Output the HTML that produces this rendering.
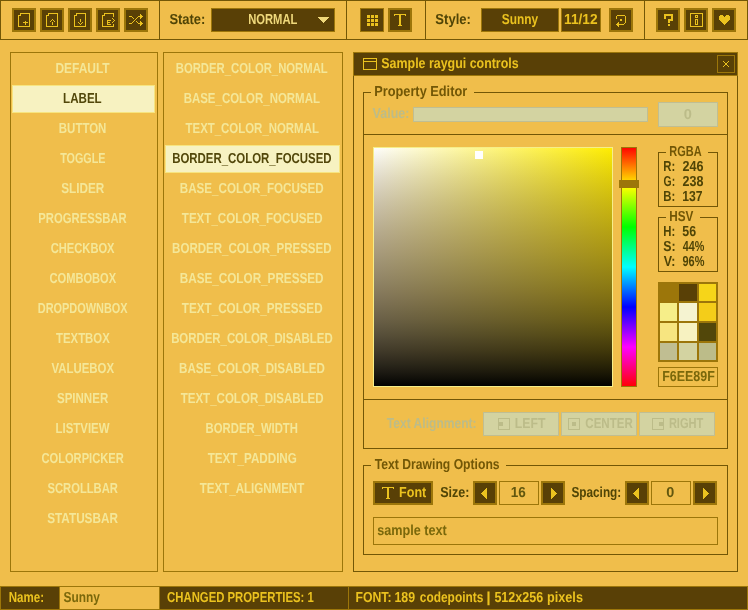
<!DOCTYPE html>
<html lang="en"><head><meta charset="utf-8"><title>rGuiStyler - Sunny</title>
<style>
html,body{margin:0;padding:0;background:#f0be4b;overflow:hidden}
svg{display:block;will-change:transform;font-family:"Liberation Sans",sans-serif;font-size:14.5px;font-weight:bold;shape-rendering:crispEdges;text-rendering:geometricPrecision}
text{white-space:pre}
</style></head>
<body>
<svg width="748" height="610" viewBox="0 0 748 610">
<defs>
<linearGradient id="gh" x1="0" y1="0" x2="1" y2="0"><stop offset="0" stop-color="#ffffff"/><stop offset="1" stop-color="#ffee00"/></linearGradient>
<linearGradient id="gv" x1="0" y1="0" x2="0" y2="1"><stop offset="0.0000" stop-color="#785f26" stop-opacity="0.0000"/><stop offset="0.0312" stop-color="#785f25" stop-opacity="0.0606"/><stop offset="0.0625" stop-color="#785f25" stop-opacity="0.1174"/><stop offset="0.0938" stop-color="#775f25" stop-opacity="0.1707"/><stop offset="0.1250" stop-color="#775e25" stop-opacity="0.2207"/><stop offset="0.1562" stop-color="#765e25" stop-opacity="0.2675"/><stop offset="0.1875" stop-color="#755d25" stop-opacity="0.3113"/><stop offset="0.2188" stop-color="#745c24" stop-opacity="0.3523"/><stop offset="0.2500" stop-color="#735b24" stop-opacity="0.3906"/><stop offset="0.2812" stop-color="#725a24" stop-opacity="0.4265"/><stop offset="0.3125" stop-color="#705923" stop-opacity="0.4602"/><stop offset="0.3438" stop-color="#6e5722" stop-opacity="0.4918"/><stop offset="0.3750" stop-color="#6c5522" stop-opacity="0.5215"/><stop offset="0.4062" stop-color="#695321" stop-opacity="0.5495"/><stop offset="0.4375" stop-color="#675120" stop-opacity="0.5759"/><stop offset="0.4688" stop-color="#634f1f" stop-opacity="0.6010"/><stop offset="0.5000" stop-color="#604c1e" stop-opacity="0.6250"/><stop offset="0.5312" stop-color="#5c491d" stop-opacity="0.6480"/><stop offset="0.5625" stop-color="#58461c" stop-opacity="0.6702"/><stop offset="0.5938" stop-color="#54421a" stop-opacity="0.6917"/><stop offset="0.6250" stop-color="#4f3e19" stop-opacity="0.7129"/><stop offset="0.6562" stop-color="#4a3a17" stop-opacity="0.7338"/><stop offset="0.6875" stop-color="#443615" stop-opacity="0.7546"/><stop offset="0.7188" stop-color="#3f3214" stop-opacity="0.7756"/><stop offset="0.7500" stop-color="#382d12" stop-opacity="0.7969"/><stop offset="0.7812" stop-color="#322810" stop-opacity="0.8186"/><stop offset="0.8125" stop-color="#2b220e" stop-opacity="0.8411"/><stop offset="0.8438" stop-color="#251d0b" stop-opacity="0.8643"/><stop offset="0.8750" stop-color="#1e1709" stop-opacity="0.8887"/><stop offset="0.9062" stop-color="#161207" stop-opacity="0.9142"/><stop offset="0.9375" stop-color="#0f0c05" stop-opacity="0.9412"/><stop offset="0.9688" stop-color="#070602" stop-opacity="0.9697"/><stop offset="1.0000" stop-color="#000000" stop-opacity="1.0000"/></linearGradient>
<linearGradient id="hue" x1="0" y1="0" x2="0" y2="1"><stop offset="0" stop-color="#ff0000"/><stop offset="0.1667" stop-color="#ffff00"/><stop offset="0.3333" stop-color="#00ff00"/><stop offset="0.5" stop-color="#00ffff"/><stop offset="0.6667" stop-color="#0000ff"/><stop offset="0.8333" stop-color="#ff00ff"/><stop offset="1" stop-color="#ff0000"/></linearGradient>
</defs>
<rect x="0" y="0" width="748" height="610" fill="#f0be4b"/>
<rect x="0" y="0" width="160" height="1" fill="#725706"/>
<rect x="0" y="39" width="160" height="1" fill="#725706"/>
<rect x="0" y="1" width="1" height="38" fill="#725706"/>
<rect x="159" y="1" width="1" height="38" fill="#725706"/>
<rect x="159" y="0" width="188" height="1" fill="#725706"/>
<rect x="159" y="39" width="188" height="1" fill="#725706"/>
<rect x="159" y="1" width="1" height="38" fill="#725706"/>
<rect x="346" y="1" width="1" height="38" fill="#725706"/>
<rect x="346" y="0" width="80" height="1" fill="#725706"/>
<rect x="346" y="39" width="80" height="1" fill="#725706"/>
<rect x="346" y="1" width="1" height="38" fill="#725706"/>
<rect x="425" y="1" width="1" height="38" fill="#725706"/>
<rect x="425" y="0" width="220" height="1" fill="#725706"/>
<rect x="425" y="39" width="220" height="1" fill="#725706"/>
<rect x="425" y="1" width="1" height="38" fill="#725706"/>
<rect x="644" y="1" width="1" height="38" fill="#725706"/>
<rect x="644" y="0" width="104" height="1" fill="#725706"/>
<rect x="644" y="39" width="104" height="1" fill="#725706"/>
<rect x="644" y="1" width="1" height="38" fill="#725706"/>
<rect x="747" y="1" width="1" height="38" fill="#725706"/>
<rect x="12" y="8" width="24" height="24" fill="#9c760a"/>
<rect x="14" y="10" width="20" height="20" fill="#594006"/>
<path d="M20 13h10v1h-10zM20 14h1v1h-1zM29 14h1v1h-1zM18 15h3v1h-3zM29 15h1v1h-1zM18 16h1v1h-1zM29 16h1v1h-1zM18 17h1v1h-1zM29 17h1v1h-1zM18 18h1v1h-1zM29 18h1v1h-1zM18 19h1v1h-1zM29 19h1v1h-1zM18 20h1v1h-1zM29 20h1v1h-1zM18 21h1v1h-1zM25 21h1v1h-1zM29 21h1v1h-1zM18 22h1v1h-1zM23 22h5v1h-5zM29 22h1v1h-1zM18 23h1v1h-1zM25 23h1v1h-1zM29 23h1v1h-1zM18 24h1v1h-1zM25 24h1v1h-1zM29 24h1v1h-1zM18 25h1v1h-1zM29 25h1v1h-1zM18 26h12v1h-12z" fill="#ebc21f"/>
<rect x="40" y="8" width="24" height="24" fill="#9c760a"/>
<rect x="42" y="10" width="20" height="20" fill="#594006"/>
<path d="M48 13h10v1h-10zM48 14h1v1h-1zM57 14h1v1h-1zM46 15h3v1h-3zM57 15h1v1h-1zM46 16h1v1h-1zM57 16h1v1h-1zM46 17h1v1h-1zM57 17h1v1h-1zM46 18h1v1h-1zM57 18h1v1h-1zM46 19h1v1h-1zM52 19h1v1h-1zM57 19h1v1h-1zM46 20h1v1h-1zM51 20h1v1h-1zM53 20h1v1h-1zM57 20h1v1h-1zM46 21h1v1h-1zM50 21h1v1h-1zM54 21h1v1h-1zM57 21h1v1h-1zM46 22h1v1h-1zM52 22h1v1h-1zM57 22h1v1h-1zM46 23h1v1h-1zM52 23h1v1h-1zM57 23h1v1h-1zM46 24h1v1h-1zM52 24h1v1h-1zM57 24h1v1h-1zM46 25h1v1h-1zM57 25h1v1h-1zM46 26h12v1h-12z" fill="#ebc21f"/>
<rect x="68" y="8" width="24" height="24" fill="#9c760a"/>
<rect x="70" y="10" width="20" height="20" fill="#594006"/>
<path d="M76 13h10v1h-10zM76 14h1v1h-1zM85 14h1v1h-1zM74 15h3v1h-3zM85 15h1v1h-1zM74 16h1v1h-1zM85 16h1v1h-1zM74 17h1v1h-1zM85 17h1v1h-1zM74 18h1v1h-1zM85 18h1v1h-1zM74 19h1v1h-1zM80 19h1v1h-1zM85 19h1v1h-1zM74 20h1v1h-1zM80 20h1v1h-1zM85 20h1v1h-1zM74 21h1v1h-1zM80 21h1v1h-1zM85 21h1v1h-1zM74 22h1v1h-1zM78 22h1v1h-1zM82 22h1v1h-1zM85 22h1v1h-1zM74 23h1v1h-1zM79 23h1v1h-1zM81 23h1v1h-1zM85 23h1v1h-1zM74 24h1v1h-1zM80 24h1v1h-1zM85 24h1v1h-1zM74 25h1v1h-1zM85 25h1v1h-1zM74 26h12v1h-12z" fill="#ebc21f"/>
<rect x="96" y="8" width="24" height="24" fill="#9c760a"/>
<rect x="98" y="10" width="20" height="20" fill="#594006"/>
<path d="M104 13h10v1h-10zM104 14h1v1h-1zM113 14h1v1h-1zM102 15h3v1h-3zM113 15h1v1h-1zM102 16h1v1h-1zM113 16h1v1h-1zM102 17h1v1h-1zM102 18h1v1h-1zM112 18h1v1h-1zM102 19h1v1h-1zM113 19h1v1h-1zM102 20h1v1h-1zM107 20h4v1h-4zM114 20h1v1h-1zM102 21h1v1h-1zM107 21h1v1h-1zM113 21h1v1h-1zM102 22h1v1h-1zM107 22h3v1h-3zM112 22h1v1h-1zM102 23h1v1h-1zM107 23h1v1h-1zM102 24h1v1h-1zM107 24h4v1h-4zM113 24h1v1h-1zM102 25h1v1h-1zM113 25h1v1h-1zM102 26h12v1h-12z" fill="#ebc21f"/>
<rect x="124" y="8" width="24" height="24" fill="#9c760a"/>
<rect x="126" y="10" width="20" height="20" fill="#594006"/>
<path d="M140 14h1v1h-1zM140 15h2v1h-2zM129 16h3v1h-3zM138 16h5v1h-5zM132 17h1v1h-1zM137 17h1v1h-1zM140 17h2v1h-2zM133 18h1v1h-1zM136 18h1v1h-1zM140 18h1v1h-1zM135 19h1v1h-1zM134 20h1v1h-1zM133 21h1v1h-1zM136 21h1v1h-1zM140 21h1v1h-1zM132 22h1v1h-1zM137 22h1v1h-1zM140 22h2v1h-2zM129 23h3v1h-3zM138 23h5v1h-5zM140 24h2v1h-2zM140 25h1v1h-1z" fill="#ebc21f"/>
<text x="169.38" y="24" textLength="36.02" lengthAdjust="spacingAndGlyphs" fill="#504506">State:</text>
<rect x="211" y="8" width="124" height="24" fill="#9c760a"/>
<rect x="212" y="9" width="122" height="22" fill="#594006"/>
<text x="248.19" y="24" textLength="49.20" lengthAdjust="spacingAndGlyphs" fill="#efd87b">NORMAL</text>
<path d="M318 17h11l-5.5 6z" fill="#efd87b"/>
<rect x="360" y="8" width="24" height="24" fill="#9c760a"/>
<rect x="361" y="9" width="22" height="22" fill="#594006"/>
<path d="M367 15h3v1h-3zM371 15h3v1h-3zM375 15h3v1h-3zM367 16h3v1h-3zM371 16h3v1h-3zM375 16h3v1h-3zM367 17h3v1h-3zM371 17h3v1h-3zM375 17h3v1h-3zM367 19h3v1h-3zM371 19h3v1h-3zM375 19h3v1h-3zM367 20h3v1h-3zM371 20h3v1h-3zM375 20h3v1h-3zM367 21h3v1h-3zM371 21h3v1h-3zM375 21h3v1h-3zM367 23h3v1h-3zM371 23h3v1h-3zM375 23h3v1h-3zM367 24h3v1h-3zM371 24h3v1h-3zM375 24h3v1h-3zM367 25h3v1h-3zM371 25h3v1h-3zM375 25h3v1h-3z" fill="#ebc21f"/>
<rect x="388" y="8" width="24" height="24" fill="#9c760a"/>
<rect x="390" y="10" width="20" height="20" fill="#594006"/>
<path d="M394 14h12v1h-12zM394 15h1v1h-1zM399 15h2v1h-2zM405 15h1v1h-1zM399 16h2v1h-2zM399 17h2v1h-2zM399 18h2v1h-2zM399 19h2v1h-2zM399 20h2v1h-2zM399 21h2v1h-2zM399 22h2v1h-2zM399 23h2v1h-2zM399 24h2v1h-2zM398 25h4v1h-4z" fill="#ebc21f"/>
<text x="435.37" y="24" textLength="35.49" lengthAdjust="spacingAndGlyphs" fill="#504506">Style:</text>
<rect x="481" y="8" width="78" height="24" fill="#9c760a"/>
<rect x="482" y="9" width="76" height="22" fill="#594006"/>
<text x="501.69" y="24" textLength="36.40" lengthAdjust="spacingAndGlyphs" fill="#ebc21f">Sunny</text>
<rect x="561" y="8" width="40" height="24" fill="#9c760a"/>
<rect x="562" y="9" width="38" height="22" fill="#594006"/>
<text x="564.08" y="24" textLength="33.55" lengthAdjust="spacingAndGlyphs" fill="#ebc21f">11/12</text>
<rect x="609" y="8" width="24" height="24" fill="#9c760a"/>
<rect x="611" y="10" width="20" height="20" fill="#594006"/>
<path d="M617 15h8v1h-8zM616 16h1v1h-1zM625 16h1v1h-1zM616 17h1v1h-1zM625 17h1v1h-1zM616 18h1v1h-1zM625 18h1v1h-1zM620 19h2v1h-2zM625 19h1v1h-1zM620 20h2v1h-2zM625 20h1v1h-1zM625 21h1v1h-1zM618 22h1v1h-1zM625 22h1v1h-1zM617 23h2v1h-2zM624 23h1v1h-1zM616 24h8v1h-8zM617 25h2v1h-2zM618 26h1v1h-1z" fill="#ebc21f"/>
<rect x="656" y="8" width="24" height="24" fill="#9c760a"/>
<rect x="658" y="10" width="20" height="20" fill="#594006"/>
<path d="M664 14h9v1h-9zM664 15h9v1h-9zM664 16h2v1h-2zM671 16h2v1h-2zM664 17h2v1h-2zM671 17h2v1h-2zM664 18h2v1h-2zM671 18h2v1h-2zM668 19h5v1h-5zM668 20h5v1h-5zM668 21h2v1h-2zM668 22h2v1h-2zM668 24h2v1h-2zM668 25h2v1h-2z" fill="#ebc21f"/>
<rect x="684" y="8" width="24" height="24" fill="#9c760a"/>
<rect x="686" y="10" width="20" height="20" fill="#594006"/>
<path d="M690 13h13v1h-13zM690 14h1v1h-1zM702 14h1v1h-1zM690 15h1v1h-1zM695 15h3v1h-3zM702 15h1v1h-1zM690 16h1v1h-1zM695 16h1v1h-1zM697 16h1v1h-1zM702 16h1v1h-1zM690 17h1v1h-1zM695 17h3v1h-3zM702 17h1v1h-1zM690 18h1v1h-1zM702 18h1v1h-1zM690 19h1v1h-1zM695 19h3v1h-3zM702 19h1v1h-1zM690 20h1v1h-1zM695 20h1v1h-1zM697 20h1v1h-1zM702 20h1v1h-1zM690 21h1v1h-1zM695 21h1v1h-1zM697 21h1v1h-1zM702 21h1v1h-1zM690 22h1v1h-1zM695 22h1v1h-1zM697 22h1v1h-1zM702 22h1v1h-1zM690 23h1v1h-1zM695 23h1v1h-1zM697 23h1v1h-1zM702 23h1v1h-1zM690 24h1v1h-1zM695 24h3v1h-3zM702 24h1v1h-1zM690 25h1v1h-1zM702 25h1v1h-1zM690 26h13v1h-13z" fill="#ebc21f"/>
<rect x="712" y="8" width="24" height="24" fill="#9c760a"/>
<rect x="714" y="10" width="20" height="20" fill="#594006"/>
<path d="M720 15h3v1h-3zM726 15h3v1h-3zM719 16h5v1h-5zM725 16h5v1h-5zM719 17h11v1h-11zM719 18h11v1h-11zM719 19h11v1h-11zM720 20h9v1h-9zM721 21h7v1h-7zM722 22h5v1h-5zM723 23h3v1h-3zM724 24h1v1h-1z" fill="#ebc21f"/>
<rect x="10" y="52" width="148" height="1" fill="#9c760a"/>
<rect x="10" y="571" width="148" height="1" fill="#9c760a"/>
<rect x="10" y="53" width="1" height="518" fill="#9c760a"/>
<rect x="157" y="53" width="1" height="518" fill="#9c760a"/>
<text x="55.38" y="73" textLength="54.30" lengthAdjust="spacingAndGlyphs" fill="#f4e798">DEFAULT</text>
<rect x="12" y="85" width="143" height="28" fill="#f7e580"/>
<rect x="13" y="86" width="141" height="26" fill="#f7f2c1"/>
<text x="63.09" y="103" textLength="38.63" lengthAdjust="spacingAndGlyphs" fill="#52470a">LABEL</text>
<text x="58.85" y="133" textLength="47.50" lengthAdjust="spacingAndGlyphs" fill="#f4e798">BUTTON</text>
<text x="60.15" y="163" textLength="45.39" lengthAdjust="spacingAndGlyphs" fill="#f4e798">TOGGLE</text>
<text x="61.13" y="193" textLength="43.07" lengthAdjust="spacingAndGlyphs" fill="#f4e798">SLIDER</text>
<text x="38.29" y="223" textLength="88.46" lengthAdjust="spacingAndGlyphs" fill="#f4e798">PROGRESSBAR</text>
<text x="50.72" y="253" textLength="63.83" lengthAdjust="spacingAndGlyphs" fill="#f4e798">CHECKBOX</text>
<text x="49.52" y="283" textLength="66.58" lengthAdjust="spacingAndGlyphs" fill="#f4e798">COMBOBOX</text>
<text x="37.75" y="313" textLength="89.89" lengthAdjust="spacingAndGlyphs" fill="#f4e798">DROPDOWNBOX</text>
<text x="56.09" y="343" textLength="53.67" lengthAdjust="spacingAndGlyphs" fill="#f4e798">TEXTBOX</text>
<text x="51.51" y="373" textLength="62.50" lengthAdjust="spacingAndGlyphs" fill="#f4e798">VALUEBOX</text>
<text x="56.97" y="403" textLength="51.24" lengthAdjust="spacingAndGlyphs" fill="#f4e798">SPINNER</text>
<text x="55.55" y="433" textLength="53.90" lengthAdjust="spacingAndGlyphs" fill="#f4e798">LISTVIEW</text>
<text x="41.45" y="463" textLength="82.31" lengthAdjust="spacingAndGlyphs" fill="#f4e798">COLORPICKER</text>
<text x="47.47" y="493" textLength="70.48" lengthAdjust="spacingAndGlyphs" fill="#f4e798">SCROLLBAR</text>
<text x="47.22" y="523" textLength="70.65" lengthAdjust="spacingAndGlyphs" fill="#f4e798">STATUSBAR</text>
<rect x="163" y="52" width="180" height="1" fill="#9c760a"/>
<rect x="163" y="571" width="180" height="1" fill="#9c760a"/>
<rect x="163" y="53" width="1" height="518" fill="#9c760a"/>
<rect x="342" y="53" width="1" height="518" fill="#9c760a"/>
<text x="175.74" y="73" textLength="152.00" lengthAdjust="spacingAndGlyphs" fill="#f4e798">BORDER<tspan dy="1.2">_</tspan><tspan dy="-1.2">COLOR</tspan><tspan dy="1.2">_</tspan><tspan dy="-1.2">NORMAL</tspan></text>
<text x="183.70" y="103" textLength="136.22" lengthAdjust="spacingAndGlyphs" fill="#f4e798">BASE<tspan dy="1.2">_</tspan><tspan dy="-1.2">COLOR</tspan><tspan dy="1.2">_</tspan><tspan dy="-1.2">NORMAL</tspan></text>
<text x="185.56" y="133" textLength="133.32" lengthAdjust="spacingAndGlyphs" fill="#f4e798">TEXT<tspan dy="1.2">_</tspan><tspan dy="-1.2">COLOR</tspan><tspan dy="1.2">_</tspan><tspan dy="-1.2">NORMAL</tspan></text>
<rect x="165" y="145" width="175" height="28" fill="#f7e580"/>
<rect x="166" y="146" width="173" height="26" fill="#f7f2c1"/>
<text x="172.19" y="163" textLength="159.42" lengthAdjust="spacingAndGlyphs" fill="#52470a">BORDER<tspan dy="1.2">_</tspan><tspan dy="-1.2">COLOR</tspan><tspan dy="1.2">_</tspan><tspan dy="-1.2">FOCUSED</tspan></text>
<text x="179.81" y="193" textLength="143.83" lengthAdjust="spacingAndGlyphs" fill="#f4e798">BASE<tspan dy="1.2">_</tspan><tspan dy="-1.2">COLOR</tspan><tspan dy="1.2">_</tspan><tspan dy="-1.2">FOCUSED</tspan></text>
<text x="181.82" y="223" textLength="140.81" lengthAdjust="spacingAndGlyphs" fill="#f4e798">TEXT<tspan dy="1.2">_</tspan><tspan dy="-1.2">COLOR</tspan><tspan dy="1.2">_</tspan><tspan dy="-1.2">FOCUSED</tspan></text>
<text x="172.11" y="253" textLength="159.47" lengthAdjust="spacingAndGlyphs" fill="#f4e798">BORDER<tspan dy="1.2">_</tspan><tspan dy="-1.2">COLOR</tspan><tspan dy="1.2">_</tspan><tspan dy="-1.2">PRESSED</tspan></text>
<text x="179.77" y="283" textLength="143.80" lengthAdjust="spacingAndGlyphs" fill="#f4e798">BASE<tspan dy="1.2">_</tspan><tspan dy="-1.2">COLOR</tspan><tspan dy="1.2">_</tspan><tspan dy="-1.2">PRESSED</tspan></text>
<text x="181.82" y="313" textLength="140.76" lengthAdjust="spacingAndGlyphs" fill="#f4e798">TEXT<tspan dy="1.2">_</tspan><tspan dy="-1.2">COLOR</tspan><tspan dy="1.2">_</tspan><tspan dy="-1.2">PRESSED</tspan></text>
<text x="171.14" y="343" textLength="161.50" lengthAdjust="spacingAndGlyphs" fill="#f4e798">BORDER<tspan dy="1.2">_</tspan><tspan dy="-1.2">COLOR</tspan><tspan dy="1.2">_</tspan><tspan dy="-1.2">DISABLED</tspan></text>
<text x="179.09" y="373" textLength="145.69" lengthAdjust="spacingAndGlyphs" fill="#f4e798">BASE<tspan dy="1.2">_</tspan><tspan dy="-1.2">COLOR</tspan><tspan dy="1.2">_</tspan><tspan dy="-1.2">DISABLED</tspan></text>
<text x="180.65" y="403" textLength="143.01" lengthAdjust="spacingAndGlyphs" fill="#f4e798">TEXT<tspan dy="1.2">_</tspan><tspan dy="-1.2">COLOR</tspan><tspan dy="1.2">_</tspan><tspan dy="-1.2">DISABLED</tspan></text>
<text x="205.60" y="433" textLength="92.34" lengthAdjust="spacingAndGlyphs" fill="#f4e798">BORDER<tspan dy="1.2">_</tspan><tspan dy="-1.2">WIDTH</tspan></text>
<text x="207.70" y="463" textLength="89.16" lengthAdjust="spacingAndGlyphs" fill="#f4e798">TEXT<tspan dy="1.2">_</tspan><tspan dy="-1.2">PADDING</tspan></text>
<text x="199.82" y="493" textLength="104.37" lengthAdjust="spacingAndGlyphs" fill="#f4e798">TEXT<tspan dy="1.2">_</tspan><tspan dy="-1.2">ALIGNMENT</tspan></text>
<rect x="353" y="52" width="385" height="1" fill="#725706"/>
<rect x="353" y="571" width="385" height="1" fill="#725706"/>
<rect x="353" y="53" width="1" height="518" fill="#725706"/>
<rect x="737" y="53" width="1" height="518" fill="#725706"/>
<rect x="353" y="52" width="385" height="24" fill="#9c760a"/>
<rect x="354" y="53" width="383" height="22" fill="#594006"/>
<path d="M363 58h14v1h-14zM363 59h1v1h-1zM376 59h1v1h-1zM363 60h1v1h-1zM376 60h1v1h-1zM363 61h14v1h-14zM363 62h1v1h-1zM376 62h1v1h-1zM363 63h1v1h-1zM376 63h1v1h-1zM363 64h1v1h-1zM376 64h1v1h-1zM363 65h1v1h-1zM376 65h1v1h-1zM363 66h1v1h-1zM376 66h1v1h-1zM363 67h1v1h-1zM376 67h1v1h-1zM363 68h1v1h-1zM376 68h1v1h-1zM363 69h14v1h-14z" fill="#ebc21f"/>
<text x="381.33" y="68" textLength="137.32" lengthAdjust="spacingAndGlyphs" fill="#ebc21f">Sample raygui controls</text>
<rect x="717" y="55" width="18" height="18" fill="#9c760a"/>
<rect x="718" y="56" width="16" height="16" fill="#594006"/>
<path d="M723 61h1v1h1v1h2v-1h1v-1h1v1h-1v1h-1v2h1v1h1v1h-1v-1h-1v-1h-2v1h-1v1h-1v-1h1v-1h1v-2h-1v-1h-1z" fill="#ebc21f"/>
<rect x="363" y="92" width="1" height="357" fill="#725706"/>
<rect x="727" y="92" width="1" height="357" fill="#725706"/>
<rect x="363" y="448" width="365" height="1" fill="#725706"/>
<rect x="363" y="92" width="8" height="1" fill="#725706"/>
<rect x="474" y="92" width="254" height="1" fill="#725706"/>
<text x="374.19" y="96" textLength="93.01" lengthAdjust="spacingAndGlyphs" fill="#725706">Property Editor</text>
<text x="372.62" y="118" textLength="36.78" lengthAdjust="spacingAndGlyphs" fill="#bcbc89">Value:</text>
<rect x="413" y="107" width="235" height="15" fill="#c0be92"/>
<rect x="414" y="108" width="233" height="13" fill="#d3d3a1"/>
<rect x="658" y="102" width="60" height="25" fill="#c0be92"/>
<rect x="659" y="103" width="58" height="23" fill="#d3d3a1"/>
<text x="683.72" y="119" textLength="8.13" lengthAdjust="spacingAndGlyphs" fill="#bcbc89">0</text>
<rect x="363" y="134" width="365" height="1" fill="#725706"/>
<rect x="373" y="147" width="240" height="240" fill="url(#gh)"/>
<rect x="373" y="147" width="240" height="240" fill="url(#gv)"/>
<rect x="373" y="147" width="240" height="1" fill="#f6ee89"/>
<rect x="373" y="386" width="240" height="1" fill="#f6ee89"/>
<rect x="373" y="148" width="1" height="238" fill="#f6ee89"/>
<rect x="612" y="148" width="1" height="238" fill="#f6ee89"/>
<rect x="475" y="151" width="8" height="8" fill="#ffffff"/>
<rect x="621" y="147" width="16" height="240" fill="url(#hue)"/>
<rect x="621" y="147" width="16" height="1" fill="#9c760a"/>
<rect x="621" y="386" width="16" height="1" fill="#9c760a"/>
<rect x="621" y="148" width="1" height="238" fill="#9c760a"/>
<rect x="636" y="148" width="1" height="238" fill="#9c760a"/>
<rect x="619" y="180" width="20" height="8" fill="#9c760a"/>
<rect x="658" y="152" width="1" height="55" fill="#725706"/>
<rect x="717" y="152" width="1" height="55" fill="#725706"/>
<rect x="658" y="206" width="60" height="1" fill="#725706"/>
<rect x="658" y="152" width="8" height="1" fill="#725706"/>
<rect x="708" y="152" width="10" height="1" fill="#725706"/>
<text x="669.25" y="156" textLength="32.31" lengthAdjust="spacingAndGlyphs" fill="#725706">RGBA</text>
<text x="663.32" y="171" textLength="11.96" lengthAdjust="spacingAndGlyphs" fill="#504506">R:</text>
<text x="682.59" y="171" textLength="20.96" lengthAdjust="spacingAndGlyphs" fill="#504506">246</text>
<text x="663.55" y="186" textLength="11.55" lengthAdjust="spacingAndGlyphs" fill="#504506">G:</text>
<text x="682.61" y="186" textLength="20.86" lengthAdjust="spacingAndGlyphs" fill="#504506">238</text>
<text x="663.29" y="201" textLength="11.98" lengthAdjust="spacingAndGlyphs" fill="#504506">B:</text>
<text x="682.21" y="201" textLength="20.37" lengthAdjust="spacingAndGlyphs" fill="#504506">137</text>
<rect x="658" y="217" width="1" height="55" fill="#725706"/>
<rect x="717" y="217" width="1" height="55" fill="#725706"/>
<rect x="658" y="271" width="60" height="1" fill="#725706"/>
<rect x="658" y="217" width="8" height="1" fill="#725706"/>
<rect x="700" y="217" width="18" height="1" fill="#725706"/>
<text x="669.17" y="221" textLength="24.14" lengthAdjust="spacingAndGlyphs" fill="#725706">HSV</text>
<text x="663.32" y="236" textLength="11.96" lengthAdjust="spacingAndGlyphs" fill="#504506">H:</text>
<text x="682.30" y="236" textLength="13.77" lengthAdjust="spacingAndGlyphs" fill="#504506">56</text>
<text x="663.24" y="251" textLength="12.31" lengthAdjust="spacingAndGlyphs" fill="#504506">S:</text>
<text x="682.82" y="251" textLength="21.60" lengthAdjust="spacingAndGlyphs" fill="#504506">44%</text>
<text x="663.70" y="266" textLength="11.75" lengthAdjust="spacingAndGlyphs" fill="#504506">V:</text>
<text x="682.49" y="266" textLength="21.92" lengthAdjust="spacingAndGlyphs" fill="#504506">96%</text>
<rect x="658" y="282" width="60" height="80" fill="#9c760a"/>
<rect x="660" y="284" width="17" height="17" fill="#9c760a"/>
<rect x="679" y="284" width="18" height="17" fill="#594006"/>
<rect x="699" y="284" width="17" height="17" fill="#f6d519"/>
<rect x="660" y="303" width="17" height="18" fill="#f6ee89"/>
<rect x="679" y="303" width="18" height="18" fill="#f5f3d1"/>
<rect x="699" y="303" width="17" height="18" fill="#f4cd19"/>
<rect x="660" y="323" width="17" height="18" fill="#f7e580"/>
<rect x="679" y="323" width="18" height="18" fill="#f7f2c1"/>
<rect x="699" y="323" width="17" height="18" fill="#52470a"/>
<rect x="660" y="343" width="17" height="17" fill="#c0be92"/>
<rect x="679" y="343" width="18" height="17" fill="#d3d3a1"/>
<rect x="699" y="343" width="17" height="17" fill="#bcbc89"/>
<rect x="658" y="367" width="60" height="1" fill="#9c760a"/>
<rect x="658" y="386" width="60" height="1" fill="#9c760a"/>
<rect x="658" y="368" width="1" height="18" fill="#9c760a"/>
<rect x="717" y="368" width="1" height="18" fill="#9c760a"/>
<text x="662.19" y="381" textLength="52.55" lengthAdjust="spacingAndGlyphs" fill="#7a680b">F6EE89F</text>
<rect x="363" y="399" width="365" height="1" fill="#725706"/>
<text x="386.84" y="428" textLength="89.75" lengthAdjust="spacingAndGlyphs" fill="#bcbc89">Text Alignment:</text>
<rect x="483" y="412" width="76" height="24" fill="#c0be92"/>
<rect x="484" y="413" width="74" height="22" fill="#d3d3a1"/>
<path d="M498 418h12v1h-12zM498 419h1v1h-1zM509 419h1v1h-1zM498 420h1v1h-1zM509 420h1v1h-1zM498 421h1v1h-1zM509 421h1v1h-1zM498 422h5v1h-5zM509 422h1v1h-1zM498 423h5v1h-5zM509 423h1v1h-1zM498 424h5v1h-5zM509 424h1v1h-1zM498 425h5v1h-5zM509 425h1v1h-1zM498 426h1v1h-1zM509 426h1v1h-1zM498 427h1v1h-1zM509 427h1v1h-1zM498 428h1v1h-1zM509 428h1v1h-1zM498 429h12v1h-12z" fill="#bcbc89"/>
<text x="514.85" y="428" textLength="30.53" lengthAdjust="spacingAndGlyphs" fill="#bcbc89">LEFT</text>
<rect x="561" y="412" width="76" height="24" fill="#c0be92"/>
<rect x="562" y="413" width="74" height="22" fill="#d3d3a1"/>
<path d="M568 418h12v1h-12zM568 419h1v1h-1zM579 419h1v1h-1zM568 420h1v1h-1zM579 420h1v1h-1zM568 421h1v1h-1zM579 421h1v1h-1zM568 422h1v1h-1zM572 422h4v1h-4zM579 422h1v1h-1zM568 423h1v1h-1zM572 423h4v1h-4zM579 423h1v1h-1zM568 424h1v1h-1zM572 424h4v1h-4zM579 424h1v1h-1zM568 425h1v1h-1zM572 425h4v1h-4zM579 425h1v1h-1zM568 426h1v1h-1zM579 426h1v1h-1zM568 427h1v1h-1zM579 427h1v1h-1zM568 428h1v1h-1zM579 428h1v1h-1zM568 429h12v1h-12z" fill="#bcbc89"/>
<text x="585.31" y="428" textLength="47.46" lengthAdjust="spacingAndGlyphs" fill="#bcbc89">CENTER</text>
<rect x="639" y="412" width="76" height="24" fill="#c0be92"/>
<rect x="640" y="413" width="74" height="22" fill="#d3d3a1"/>
<path d="M652 418h12v1h-12zM652 419h1v1h-1zM663 419h1v1h-1zM652 420h1v1h-1zM663 420h1v1h-1zM652 421h1v1h-1zM663 421h1v1h-1zM652 422h1v1h-1zM659 422h5v1h-5zM652 423h1v1h-1zM659 423h5v1h-5zM652 424h1v1h-1zM659 424h5v1h-5zM652 425h1v1h-1zM659 425h5v1h-5zM652 426h1v1h-1zM663 426h1v1h-1zM652 427h1v1h-1zM663 427h1v1h-1zM652 428h1v1h-1zM663 428h1v1h-1zM652 429h12v1h-12z" fill="#bcbc89"/>
<text x="668.89" y="428" textLength="34.44" lengthAdjust="spacingAndGlyphs" fill="#bcbc89">RIGHT</text>
<rect x="363" y="465" width="1" height="90" fill="#725706"/>
<rect x="727" y="465" width="1" height="90" fill="#725706"/>
<rect x="363" y="554" width="365" height="1" fill="#725706"/>
<rect x="363" y="465" width="8" height="1" fill="#725706"/>
<rect x="506" y="465" width="222" height="1" fill="#725706"/>
<text x="374.75" y="469" textLength="124.85" lengthAdjust="spacingAndGlyphs" fill="#725706">Text Drawing Options</text>
<rect x="373" y="481" width="60" height="24" fill="#9c760a"/>
<rect x="375" y="483" width="56" height="20" fill="#594006"/>
<path d="M382 487h12v1h-12zM382 488h1v1h-1zM387 488h2v1h-2zM393 488h1v1h-1zM387 489h2v1h-2zM387 490h2v1h-2zM387 491h2v1h-2zM387 492h2v1h-2zM387 493h2v1h-2zM387 494h2v1h-2zM387 495h2v1h-2zM387 496h2v1h-2zM387 497h2v1h-2zM386 498h4v1h-4z" fill="#ebc21f"/>
<text x="399.09" y="497" textLength="27.13" lengthAdjust="spacingAndGlyphs" fill="#ebc21f">Font</text>
<text x="440.20" y="497" textLength="29.29" lengthAdjust="spacingAndGlyphs" fill="#504506">Size:</text>
<rect x="473" y="481" width="24" height="24" fill="#9c760a"/>
<rect x="475" y="483" width="20" height="20" fill="#594006"/>
<path d="M486 488h1v1h-1zM485 489h2v1h-2zM484 490h3v1h-3zM483 491h4v1h-4zM482 492h5v1h-5zM481 493h6v1h-6zM482 494h5v1h-5zM483 495h4v1h-4zM484 496h3v1h-3zM485 497h2v1h-2zM486 498h1v1h-1z" fill="#ebc21f"/>
<rect x="499" y="481" width="40" height="1" fill="#9c760a"/>
<rect x="499" y="504" width="40" height="1" fill="#9c760a"/>
<rect x="499" y="482" width="1" height="22" fill="#9c760a"/>
<rect x="538" y="482" width="1" height="22" fill="#9c760a"/>
<text x="510.67" y="497" textLength="15.03" lengthAdjust="spacingAndGlyphs" fill="#62570e">16</text>
<rect x="541" y="481" width="24" height="24" fill="#9c760a"/>
<rect x="543" y="483" width="20" height="20" fill="#594006"/>
<path d="M551 488h1v1h-1zM551 489h2v1h-2zM551 490h3v1h-3zM551 491h4v1h-4zM551 492h5v1h-5zM551 493h6v1h-6zM551 494h5v1h-5zM551 495h4v1h-4zM551 496h3v1h-3zM551 497h2v1h-2zM551 498h1v1h-1z" fill="#ebc21f"/>
<text x="571.38" y="497" textLength="49.86" lengthAdjust="spacingAndGlyphs" fill="#504506">Spacing:</text>
<rect x="625" y="481" width="24" height="24" fill="#9c760a"/>
<rect x="627" y="483" width="20" height="20" fill="#594006"/>
<path d="M638 488h1v1h-1zM637 489h2v1h-2zM636 490h3v1h-3zM635 491h4v1h-4zM634 492h5v1h-5zM633 493h6v1h-6zM634 494h5v1h-5zM635 495h4v1h-4zM636 496h3v1h-3zM637 497h2v1h-2zM638 498h1v1h-1z" fill="#ebc21f"/>
<rect x="651" y="481" width="40" height="1" fill="#9c760a"/>
<rect x="651" y="504" width="40" height="1" fill="#9c760a"/>
<rect x="651" y="482" width="1" height="22" fill="#9c760a"/>
<rect x="690" y="482" width="1" height="22" fill="#9c760a"/>
<text x="666.26" y="497" textLength="8.04" lengthAdjust="spacingAndGlyphs" fill="#62570e">0</text>
<rect x="693" y="481" width="24" height="24" fill="#9c760a"/>
<rect x="695" y="483" width="20" height="20" fill="#594006"/>
<path d="M703 488h1v1h-1zM703 489h2v1h-2zM703 490h3v1h-3zM703 491h4v1h-4zM703 492h5v1h-5zM703 493h6v1h-6zM703 494h5v1h-5zM703 495h4v1h-4zM703 496h3v1h-3zM703 497h2v1h-2zM703 498h1v1h-1z" fill="#ebc21f"/>
<rect x="373" y="517" width="345" height="1" fill="#9c760a"/>
<rect x="373" y="544" width="345" height="1" fill="#9c760a"/>
<rect x="373" y="518" width="1" height="26" fill="#9c760a"/>
<rect x="717" y="518" width="1" height="26" fill="#9c760a"/>
<text x="377.16" y="535" textLength="69.49" lengthAdjust="spacingAndGlyphs" fill="#7a680b">sample text</text>
<rect x="0" y="586" width="60" height="24" fill="#9c760a"/>
<rect x="1" y="587" width="58" height="22" fill="#594006"/>
<text x="8.76" y="602" textLength="35.34" lengthAdjust="spacingAndGlyphs" fill="#ebc21f">Name:</text>
<rect x="59" y="586" width="101" height="1" fill="#9c760a"/>
<rect x="59" y="609" width="101" height="1" fill="#9c760a"/>
<rect x="59" y="587" width="1" height="22" fill="#9c760a"/>
<rect x="159" y="587" width="1" height="22" fill="#9c760a"/>
<text x="63.49" y="602" textLength="36.38" lengthAdjust="spacingAndGlyphs" fill="#7a680b">Sunny</text>
<rect x="159" y="586" width="190" height="24" fill="#9c760a"/>
<rect x="160" y="587" width="188" height="22" fill="#594006"/>
<text x="167.10" y="602" textLength="146.71" lengthAdjust="spacingAndGlyphs" fill="#ebc21f">CHANGED PROPERTIES: 1</text>
<rect x="348" y="586" width="400" height="24" fill="#9c760a"/>
<rect x="349" y="587" width="398" height="22" fill="#594006"/>
<text y="602" fill="#ebc21f"><tspan x="355.53" textLength="36.00" lengthAdjust="spacingAndGlyphs">FONT:</tspan> <tspan x="394.43" textLength="20.60" lengthAdjust="spacingAndGlyphs">189</tspan> <tspan x="419.80" textLength="63.59" lengthAdjust="spacingAndGlyphs">codepoints</tspan> <tspan x="486.27" textLength="4.49" lengthAdjust="spacingAndGlyphs">|</tspan> <tspan x="494.42" textLength="48.76" lengthAdjust="spacingAndGlyphs">512x256</tspan> <tspan x="546.97" textLength="35.97" lengthAdjust="spacingAndGlyphs">pixels</tspan></text>
</svg>
</body></html>
